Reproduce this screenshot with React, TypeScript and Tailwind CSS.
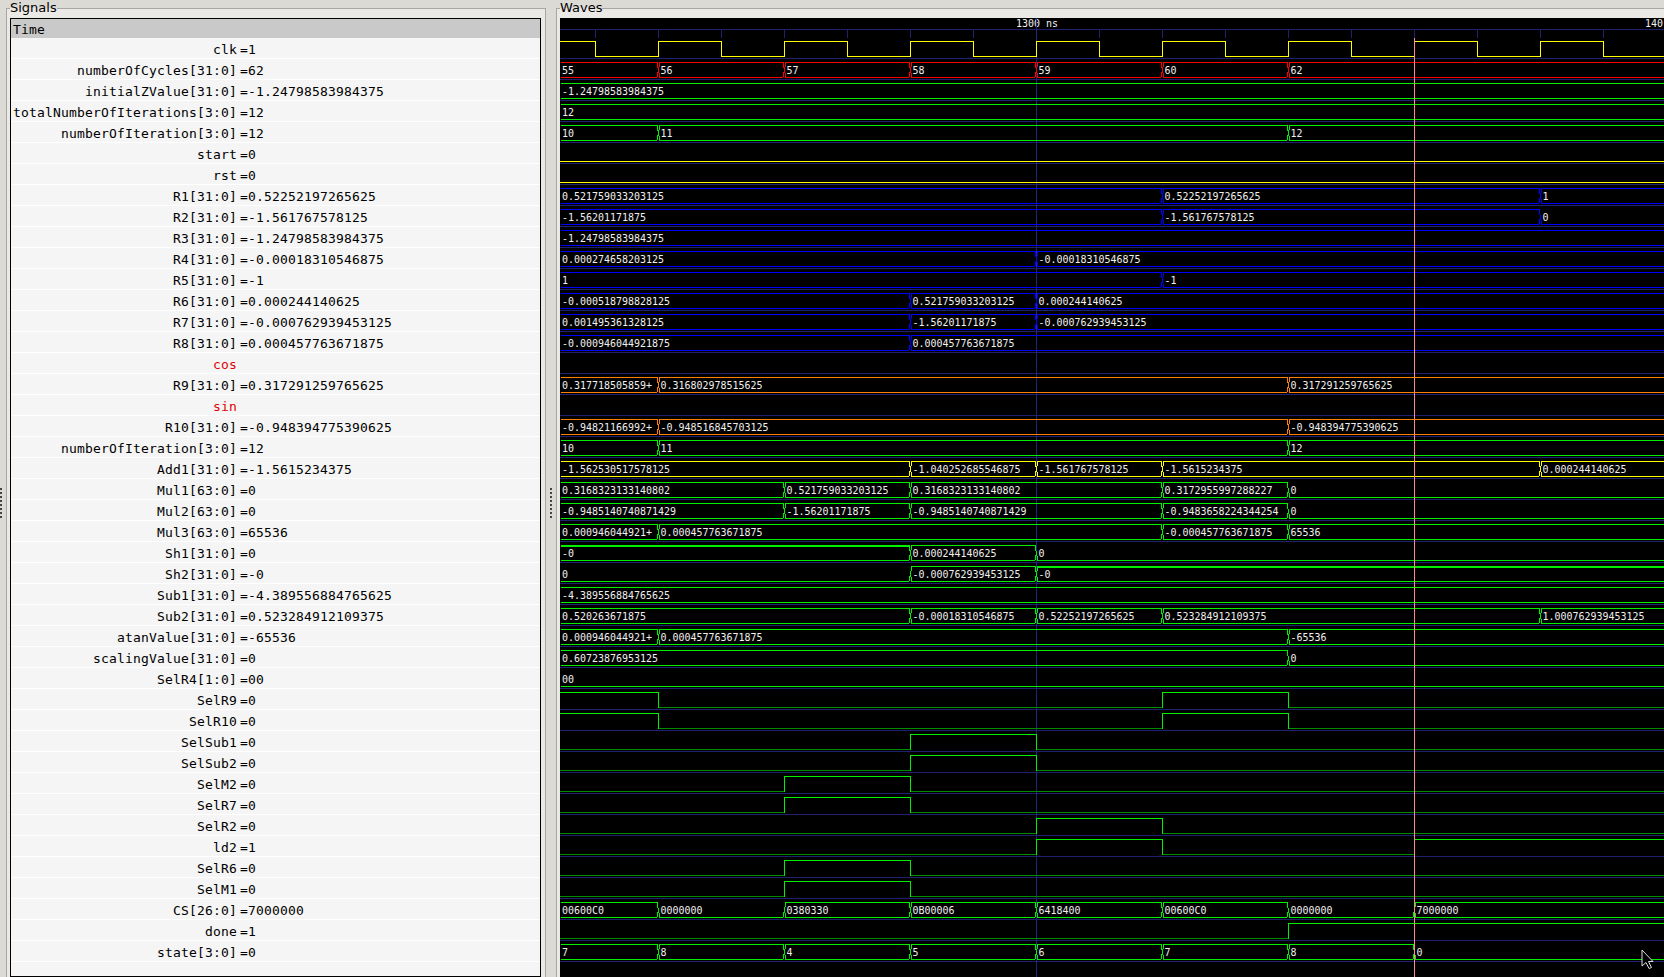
import React from 'react';

// column of the rising clock edge in each period, page coordinates
const t = [658, 784, 910, 1036, 1162, 1288, 1414, 1540];

const GREEN = '#00f000';
const BLUE = '#0000ff';
const RED = '#ff0000';
const ORANGE = '#ff8000';
const YELLOW = '#ffff00';

type Seg = [number, string];

type Signal = {
    name: string;
    value?: string;
    comment?: boolean;
    color?: string;
    bus?: Seg[];
    high?: [number, number][];
    low?: string;
};

const clockHigh: [number, number][] = [
    [560, 595], [658, 721], [784, 847], [910, 973], [1036, 1099], [1162, 1225], [1288, 1351], [1414, 1477], [1540, 1603],
];

const signals: Signal[] = [
    { name: 'clk', value: '1', color: YELLOW, high: clockHigh, low: YELLOW },
    { name: 'numberOfCycles[31:0]', value: '62', color: RED, bus: [[0, '55'], [t[0], '56'], [t[1], '57'], [t[2], '58'], [t[3], '59'], [t[4], '60'], [t[5], '62']] },
    { name: 'initialZValue[31:0]', value: '-1.24798583984375', color: GREEN, bus: [[0, '-1.24798583984375']] },
    { name: 'totalNumberOfIterations[3:0]', value: '12', color: GREEN, bus: [[0, '12']] },
    { name: 'numberOfIteration[3:0]', value: '12', color: GREEN, bus: [[0, '10'], [t[0], '11'], [t[5], '12']] },
    { name: 'start', value: '0', color: YELLOW, high: [], low: YELLOW },
    { name: 'rst', value: '0', color: YELLOW, high: [], low: YELLOW },
    { name: 'R1[31:0]', value: '0.52252197265625', color: BLUE, bus: [[0, '0.521759033203125'], [t[4], '0.52252197265625'], [t[7], '1']] },
    { name: 'R2[31:0]', value: '-1.561767578125', color: BLUE, bus: [[0, '-1.56201171875'], [t[4], '-1.561767578125'], [t[7], '0']] },
    { name: 'R3[31:0]', value: '-1.24798583984375', color: BLUE, bus: [[0, '-1.24798583984375']] },
    { name: 'R4[31:0]', value: '-0.00018310546875', color: BLUE, bus: [[0, '0.000274658203125'], [t[3], '-0.00018310546875']] },
    { name: 'R5[31:0]', value: '-1', color: BLUE, bus: [[0, '1'], [t[4], '-1']] },
    { name: 'R6[31:0]', value: '0.000244140625', color: BLUE, bus: [[0, '-0.000518798828125'], [t[2], '0.521759033203125'], [t[3], '0.000244140625']] },
    { name: 'R7[31:0]', value: '-0.000762939453125', color: BLUE, bus: [[0, '0.001495361328125'], [t[2], '-1.56201171875'], [t[3], '-0.000762939453125']] },
    { name: 'R8[31:0]', value: '0.000457763671875', color: BLUE, bus: [[0, '-0.000946044921875'], [t[2], '0.000457763671875']] },
    { name: 'cos', comment: true },
    { name: 'R9[31:0]', value: '0.317291259765625', color: ORANGE, bus: [[0, '0.317718505859+'], [t[0], '0.316802978515625'], [t[5], '0.317291259765625']] },
    { name: 'sin', comment: true },
    { name: 'R10[31:0]', value: '-0.948394775390625', color: ORANGE, bus: [[0, '-0.94821166992+'], [t[0], '-0.948516845703125'], [t[5], '-0.948394775390625']] },
    { name: 'numberOfIteration[3:0]', value: '12', color: GREEN, bus: [[0, '10'], [t[0], '11'], [t[5], '12']] },
    { name: 'Add1[31:0]', value: '-1.5615234375', color: YELLOW, bus: [[0, '-1.562530517578125'], [t[2], '-1.040252685546875'], [t[3], '-1.561767578125'], [t[4], '-1.5615234375'], [t[7], '0.000244140625']] },
    { name: 'Mul1[63:0]', value: '0', color: GREEN, bus: [[0, '0.3168323133140802'], [t[1], '0.521759033203125'], [t[2], '0.3168323133140802'], [t[4], '0.3172955997288227'], [t[5], '0']] },
    { name: 'Mul2[63:0]', value: '0', color: GREEN, bus: [[0, '-0.9485140740871429'], [t[1], '-1.56201171875'], [t[2], '-0.9485140740871429'], [t[4], '-0.9483658224344254'], [t[5], '0']] },
    { name: 'Mul3[63:0]', value: '65536', color: GREEN, bus: [[0, '0.000946044921+'], [t[0], '0.000457763671875'], [t[4], '-0.000457763671875'], [t[5], '65536']] },
    { name: 'Sh1[31:0]', value: '0', color: GREEN, bus: [[0, '-0'], [t[2], '0.000244140625'], [t[3], '0']] },
    { name: 'Sh2[31:0]', value: '-0', color: GREEN, bus: [[0, '0'], [t[2], '-0.000762939453125'], [t[3], '-0']] },
    { name: 'Sub1[31:0]', value: '-4.389556884765625', color: GREEN, bus: [[0, '-4.389556884765625']] },
    { name: 'Sub2[31:0]', value: '0.523284912109375', color: GREEN, bus: [[0, '0.520263671875'], [t[2], '-0.00018310546875'], [t[3], '0.52252197265625'], [t[4], '0.523284912109375'], [t[7], '1.000762939453125']] },
    { name: 'atanValue[31:0]', value: '-65536', color: GREEN, bus: [[0, '0.000946044921+'], [t[0], '0.000457763671875'], [t[5], '-65536']] },
    { name: 'scalingValue[31:0]', value: '0', color: GREEN, bus: [[0, '0.60723876953125'], [t[5], '0']] },
    { name: 'SelR4[1:0]', value: '00', color: GREEN, bus: [[0, '00']] },
    { name: 'SelR9', value: '0', color: GREEN, high: [[560, t[0]], [t[4], t[5]]] },
    { name: 'SelR10', value: '0', color: GREEN, high: [[560, t[0]], [t[4], t[5]]] },
    { name: 'SelSub1', value: '0', color: GREEN, high: [[t[2], t[3]]] },
    { name: 'SelSub2', value: '0', color: GREEN, high: [[t[2], t[3]]] },
    { name: 'SelM2', value: '0', color: GREEN, high: [[t[1], t[2]]] },
    { name: 'SelR7', value: '0', color: GREEN, high: [[t[1], t[2]]] },
    { name: 'SelR2', value: '0', color: GREEN, high: [[t[3], t[4]]] },
    { name: 'ld2', value: '1', color: GREEN, high: [[t[3], t[4]], [t[6], 1664]] },
    { name: 'SelR6', value: '0', color: GREEN, high: [[t[1], t[2]]] },
    { name: 'SelM1', value: '0', color: GREEN, high: [[t[1], t[2]]] },
    { name: 'CS[26:0]', value: '7000000', color: GREEN, bus: [[0, '00600C0'], [t[0], '0000000'], [t[1], '0380330'], [t[2], '0B00006'], [t[3], '6418400'], [t[4], '00600C0'], [t[5], '0000000'], [t[6], '7000000']] },
    { name: 'done', value: '1', color: GREEN, high: [[t[5], 1664]] },
    { name: 'state[3:0]', value: '0', color: GREEN, bus: [[0, '7'], [t[0], '8'], [t[1], '4'], [t[2], '5'], [t[3], '6'], [t[4], '7'], [t[5], '8'], [t[6], '0']] },
];

const isZero = (s: string) => /^0+$/.test(s);

// the wave font is 6px a character but taller than a 10px face
function Label({ x, y, children }: { x: number; y: number; children: string }) {
    return (
        <text x={x} y={y} textLength={children.length * 6} lengthAdjust="spacingAndGlyphs" className="fill-[#f0f0f0] text-[11px]">
            {children}
        </text>
    );
}

function BusWave({ row, color, segs }: { row: number; color: string; segs: Seg[] }) {
    const y0 = 38 + 21 * row;
    const top = y0 + 3.5;
    const bot = y0 + 18.5;
    const mid = y0 + 11;
    let d = '';
    segs.forEach(([x, label], i) => {
        const sx = i === 0 ? 561 : x + 2;
        const ex = i === segs.length - 1 ? 1664 : segs[i + 1][0] - 1;
        d += `M${sx} ${bot}H${ex}`;
        if (!isZero(label)) d += `M${sx} ${top}H${ex}`;
        if (i > 0) {
            const c = x + 0.5;
            d += `M${sx} ${bot}L${c} ${mid}`;
            if (!isZero(label)) d += `M${sx} ${top}L${c} ${mid}`;
            const prev = segs[i - 1][1];
            d += `M${x - 1} ${bot}L${c} ${mid}`;
            if (!isZero(prev)) d += `M${x - 1} ${top}L${c} ${mid}`;
        }
    });
    return (
        <g>
            <path d={d} stroke={color} strokeWidth={1} fill="none" shapeRendering="crispEdges" />
            {segs.map(([x, label], i) => (
                <g key={i}>
                    {label === '-0' && (
                        <rect
                            x={i === 0 ? 561 : x + 2}
                            y={y0 + 4}
                            width={(i === segs.length - 1 ? 1664 : segs[i + 1][0] - 1) - (i === 0 ? 561 : x + 2)}
                            height={1}
                            fill={color}
                        />
                    )}
                    <Label x={i === 0 ? 562 : x + 2.5} y={y0 + 15}>{label}</Label>
                </g>
            ))}
        </g>
    );
}

function BitWave({ row, color, high, low }: { row: number; color: string; high: [number, number][]; low?: string }) {
    const y0 = 38 + 21 * row;
    const top = y0 + 3.5;
    const bot = y0 + 18.5;
    let lowD = '';
    let highD = '';
    let x = 560;
    high.forEach(([a, b]) => {
        if (a > x) lowD += `M${x} ${bot}H${a}`;
        if (a > 560) highD += `M${a + 0.5} ${bot}V${top}`;
        highD += `M${a} ${top}H${b + 1}`;
        if (b < 1664) highD += `M${b + 0.5} ${top}V${bot}`;
        x = b;
    });
    if (x < 1664) lowD += `M${x} ${bot}H1664`;
    return (
        <g fill="none" strokeWidth={1} shapeRendering="crispEdges">
            <path d={lowD} stroke={low ?? '#008c00'} />
            <path d={highD} stroke={color} />
        </g>
    );
}

function WaveView() {
    const ticks: number[] = [];
    for (let x = 595; x < 1664; x += 63) ticks.push(x);
    return (
        <svg viewBox="560 18 1104 959" className="block h-[959px] w-[1104px] bg-black font-['DejaVu_Sans_Mono',monospace]">
            <Label x={1016} y={27}>1300 ns</Label>
            <Label x={1645} y={27}>140</Label>
            <g shapeRendering="crispEdges" fill="#202070">
                <rect x={560} y={29} width={1104} height={1} />
                {ticks.map((x) => (
                    <rect key={x} x={x} y={30} width={1} height={8} />
                ))}
                {signals.map((_, i) => (
                    <rect key={i} x={560} y={58 + 21 * i} width={1104} height={1} />
                ))}
                <rect x={1036} y={18} width={1} height={959} fill="#24247c" />
            </g>
            {signals.map((s, i) => {
                if (s.bus) return <BusWave key={i} row={i} color={s.color as string} segs={s.bus} />;
                if (s.high) return <BitWave key={i} row={i} color={s.color as string} high={s.high} low={s.low} />;
                return null;
            })}
            <rect x={1414} y={38} width={1} height={939} fill="#ff8a8a" shapeRendering="crispEdges" />
            {/* mouse pointer */}
            <path d="M1642 950V966L1646 962.500L1649 968.500L1651.500 967.500L1648.500 961.500H1653Z" fill="#000" stroke="#ddd" strokeWidth={1} />
        </svg>
    );
}

function Handle({ className }: { className: string }) {
    return (
        <div className={`absolute top-[488px] flex flex-col gap-[2px] ${className}`}>
            {[0, 1, 2, 3, 4, 5, 6, 7].map((i) => (
                <div key={i} className="h-[2px] w-[2px] bg-[#444]" />
            ))}
        </div>
    );
}

export default function App() {
    return (
        <div className="relative flex h-[977px] w-[1664px] overflow-hidden bg-[#dcdad5] font-['DejaVu_Sans',sans-serif] text-[13px] text-black">
            <Handle className="left-0" />
            <Handle className="left-[550px]" />

            <fieldset className="ml-[6px] h-[977px] w-[540px] shrink-0 border border-b-0 border-[#a8a8a2] bg-[#ebe9e5] pl-[3px] pr-[4px] pt-[2px]">
                <legend className="leading-[16px]">Signals</legend>
                <div className="h-[959px] overflow-hidden border border-black bg-[#f5f5f5] font-['DejaVu_Sans_Mono',monospace] tracking-[0.17px]">
                    <div className="flex h-[19px] items-center bg-[#c9c9c9] pl-[2px] pt-[2px]">Time</div>
                    {signals.map((s, i) => (
                        <div key={i} className="flex h-[21px] items-center border-b border-white pt-[3px]">
                            <div className={`w-[226px] shrink-0 whitespace-pre text-right ${s.comment ? 'text-[#e00000]' : ''}`}>
                                {s.name}
                            </div>
                            {s.value !== undefined && <div className="whitespace-pre pl-[3px]">={s.value}</div>}
                        </div>
                    ))}
                </div>
            </fieldset>

            <fieldset className="ml-[10px] h-[977px] flex-1 border border-b-0 border-r-0 border-[#a8a8a2] bg-[#ebe9e5] pl-[3px] pt-[2px]">
                <legend className="leading-[16px]">Waves</legend>
                <WaveView />
            </fieldset>
        </div>
    );
}
